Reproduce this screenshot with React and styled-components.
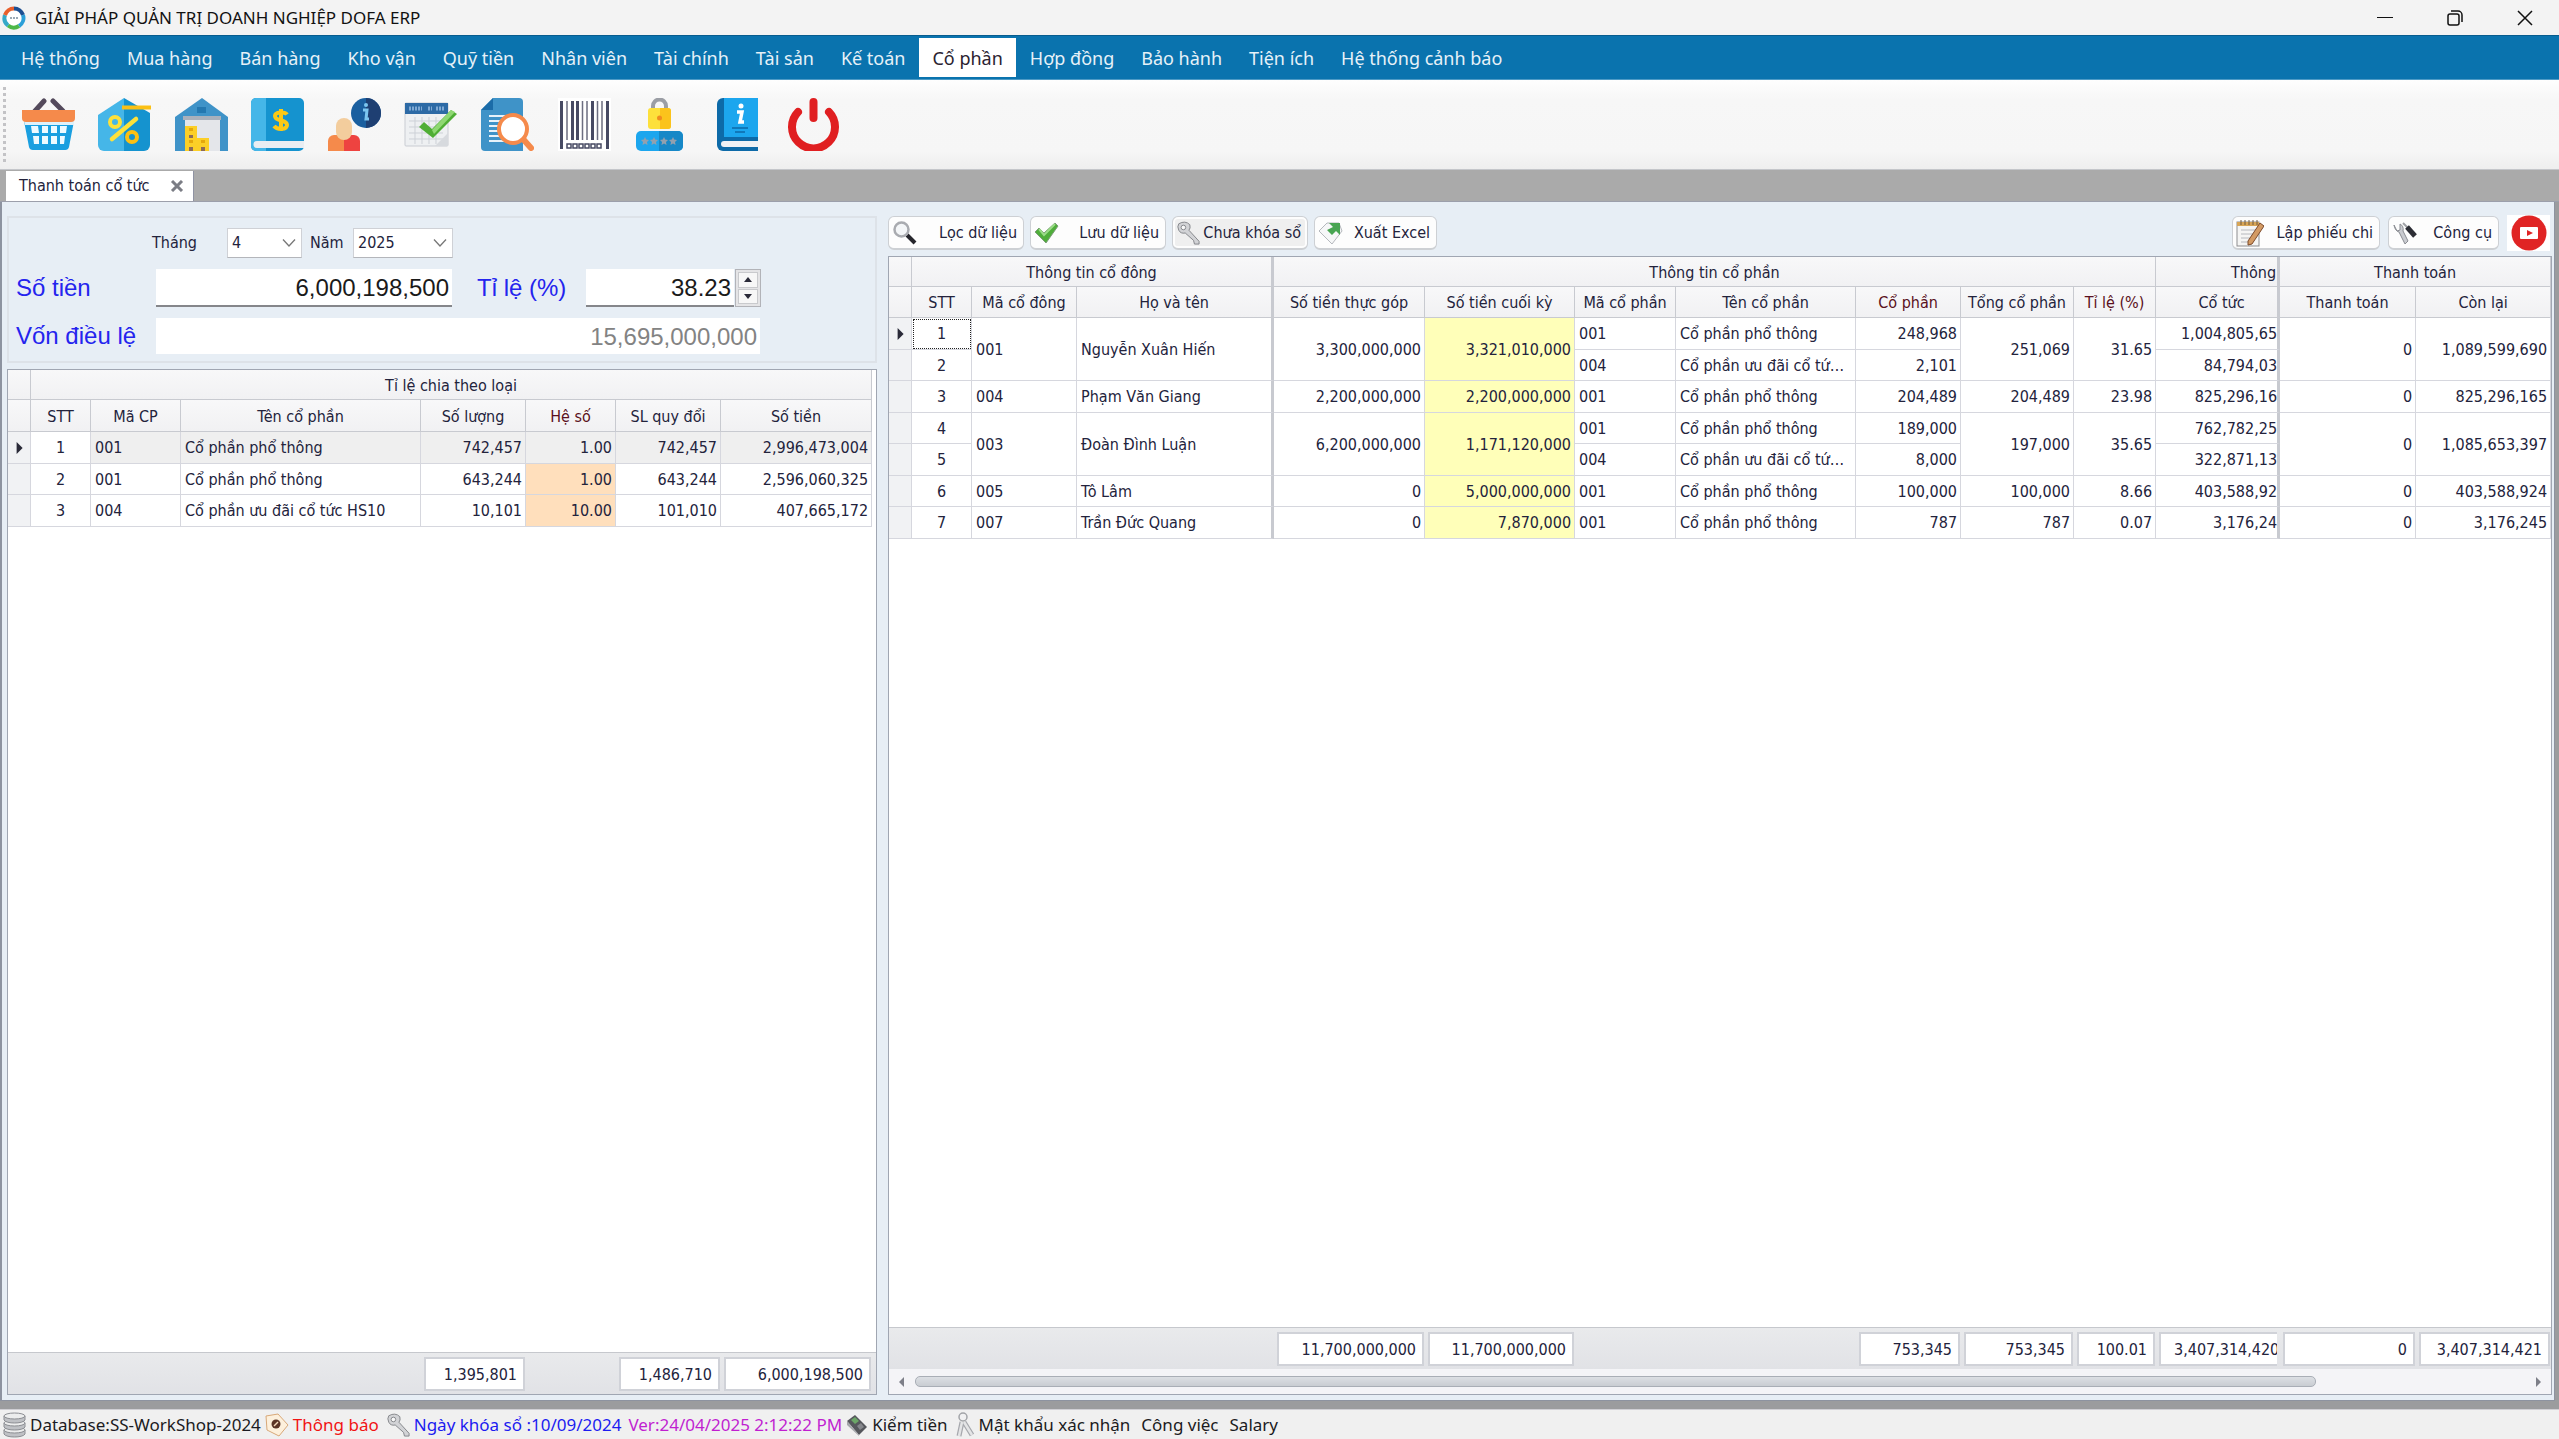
import React, { useState } from 'react';
import styled, { createGlobalStyle } from 'styled-components';

const GRID_FONT = '"DejaVu Sans Condensed", "Noto Sans", sans-serif';
const UI_FONT = '"Noto Sans", sans-serif';
const FORM_FONT = '"Liberation Sans", Arial, sans-serif';

const MENU = [
  'Hệ thống',
  'Mua hàng',
  'Bán hàng',
  'Kho vận',
  'Quỹ tiền',
  'Nhân viên',
  'Tài chính',
  'Tài sản',
  'Kế toán',
  'Cổ phần',
  'Hợp đồng',
  'Bảo hành',
  'Tiện ích',
  'Hệ thống cảnh báo',
];

const RATIO_COLS = [23, 60, 90, 240, 105, 90, 105, 151];

const RATIO_ROWS = [
  ['1', '001', 'Cổ phần phổ thông', '742,457', '1.00', '742,457', '2,996,473,004'],
  ['2', '001', 'Cổ phần phổ thông', '643,244', '1.00', '643,244', '2,596,060,325'],
  ['3', '004', 'Cổ phần ưu đãi cổ tức HS10', '10,101', '10.00', '101,010', '407,665,172'],
];

const HOLDER_COLS = [23, 60, 105, 197, 151, 150, 101, 180, 105, 113, 82, 124, 136, 135];

const HOLDERS = [
  {
    code: '001',
    name: 'Nguyễn Xuân Hiến',
    paidIn: '3,300,000,000',
    closing: '3,321,010,000',
    total: '251,069',
    rate: '31.65',
    paid: '0',
    left: '1,089,599,690',
    shares: [
      ['1', '001', 'Cổ phần phổ thông', '248,968', '1,004,805,65'],
      ['2', '004', 'Cổ phần ưu đãi cổ tức HS10', '2,101', '84,794,03'],
    ],
  },
  {
    code: '004',
    name: 'Phạm Văn Giang',
    paidIn: '2,200,000,000',
    closing: '2,200,000,000',
    total: '204,489',
    rate: '23.98',
    paid: '0',
    left: '825,296,165',
    shares: [['3', '001', 'Cổ phần phổ thông', '204,489', '825,296,16']],
  },
  {
    code: '003',
    name: 'Đoàn Đình Luận',
    paidIn: '6,200,000,000',
    closing: '1,171,120,000',
    total: '197,000',
    rate: '35.65',
    paid: '0',
    left: '1,085,653,397',
    shares: [
      ['4', '001', 'Cổ phần phổ thông', '189,000', '762,782,25'],
      ['5', '004', 'Cổ phần ưu đãi cổ tức HS10', '8,000', '322,871,13'],
    ],
  },
  {
    code: '005',
    name: 'Tô Lâm',
    paidIn: '0',
    closing: '5,000,000,000',
    total: '100,000',
    rate: '8.66',
    paid: '0',
    left: '403,588,924',
    shares: [['6', '001', 'Cổ phần phổ thông', '100,000', '403,588,92']],
  },
  {
    code: '007',
    name: 'Trần Đức Quang',
    paidIn: '0',
    closing: '7,870,000',
    total: '787',
    rate: '0.07',
    paid: '0',
    left: '3,176,245',
    shares: [['7', '001', 'Cổ phần phổ thông', '787', '3,176,24']],
  },
];

const GlobalStyle = createGlobalStyle`
  *, *::before, *::after {
    box-sizing: border-box;
  }
  body {
    margin: 0;
    background: #f0f0f0;
    color: #23233c;
    font: 16px/20px ${GRID_FONT};
  }
  button, input, select {
    font: inherit;
    color: inherit;
    margin: 0;
  }
  svg {
    display: block;
    flex: none;
  }
`;

const Window = styled.div`
  min-height: 100vh;
  display: flex;
  flex-direction: column;
`;

const TitleBar = styled.header`
  height: 35px;
  display: flex;
  align-items: center;
  gap: 9px;
  padding: 0 4px 0 2px;
  background: #f3f3f3;
  color: #111;
  font: 17px/24px ${UI_FONT};
`;

const TitleText = styled.h1`
  flex: 1;
  margin: 0;
  font: inherit;
`;

const WindowButton = styled.button`
  width: 61px;
  height: 34px;
  padding: 0;
  border: 0;
  background: none;
  display: grid;
  place-items: center;
`;

const MenuBar = styled.nav`
  height: 45px;
  display: flex;
  align-items: center;
  gap: 1px;
  padding-left: 8px;
  background: #0a73ae;
  border-top: 1px solid #075c8e;
  border-bottom: 1px solid #4e9bc6;
  font: 18px/24px ${UI_FONT};
`;

const MenuItem = styled.button`
  height: 39px;
  padding: 0 13px;
  border: 0;
  background: ${p => (p.$active ? '#fff' : 'transparent')};
  color: ${p => (p.$active ? '#2b2330' : '#e6f1f8')};
`;

const Toolbar = styled.div`
  height: 90px;
  display: flex;
  align-items: center;
  background: linear-gradient(#fefefe, #f7f7f7 22%, #f6f6f6 80%, #eee);
  border-bottom: 1px solid #c4c6ca;
`;

const Grip = styled.span`
  width: 3px;
  height: 76px;
  margin: 0 4px 0 3px;
  background: repeating-linear-gradient(#c3c3c6 0 3px, transparent 3px 6px);
`;

const Tools = styled.div`
  width: 842px;
  display: grid;
  grid-template-columns: repeat(11, 1fr);
`;

const Tool = styled.button`
  padding: 0;
  border: 0;
  background: none;
  display: grid;
  place-items: center;
`;

const TabStrip = styled.div`
  height: 32px;
  display: flex;
  align-items: flex-end;
  padding-left: 6px;
  background: #aaa;
  border-bottom: 1px solid #9c9fab;
`;

const Tab = styled.div`
  height: 30px;
  width: 188px;
  display: flex;
  align-items: center;
  justify-content: space-between;
  padding: 0 9px 0 13px;
  background: #fff;
  border-right: 1px solid #8f93a3;
`;

const TabClose = styled.button`
  width: 14px;
  padding: 0;
  border: 0;
  background: none;
`;

const Workspace = styled.main`
  flex: 1;
  display: flex;
  padding: 0 4px 8px 0;
  background: #9b9c9e;
`;

const Content = styled.div`
  flex: 1;
  min-width: 0;
  display: flex;
  gap: 11px;
  padding: 14px 2px 5px 5px;
  background: #e7eef5;
  border: solid #8d93a0;
  border-width: 0 1px 1px 2px;
`;

const LeftPane = styled.section`
  flex: none;
  width: 870px;
  display: flex;
  flex-direction: column;
  gap: 6px;
`;

const RightPane = styled.section`
  flex: 1;
  min-width: 0;
  display: flex;
  flex-direction: column;
  gap: 6px;
`;

const Filter = styled.form`
  height: 147px;
  display: flex;
  flex-direction: column;
  gap: 11px;
  padding: 10px 7px;
  border: 2px solid #dde2e8;
`;

const Line = styled.div`
  display: flex;
  align-items: center;
  padding-left: ${p => (p.$indent ? 136 : 0)}px;
`;

const SmallLabel = styled.label`
  width: ${p => p.$w}px;
  padding-left: ${p => p.$pad || 0}px;
`;

const BigLabel = styled.label`
  width: ${p => p.$w}px;
  padding-left: ${p => p.$pad || 0}px;
  color: #2424ee;
  font: 24px/32px ${FORM_FONT};
`;

const SelectBox = styled.span`
  width: ${p => p.$w}px;
  display: grid;
  align-items: center;

  > * {
    grid-area: 1 / 1;
  }
  > svg {
    justify-self: end;
    margin-right: 6px;
    pointer-events: none;
  }
`;

const Select = styled.select`
  height: 30px;
  padding: 0 4px;
  appearance: none;
  background: #fff;
  border: 1px solid #cfd1d6;
  border-bottom-color: #b4b6bb;
`;

const Amount = styled.input`
  width: ${p => p.$w}px;
  height: ${p => (p.readOnly ? 36 : 38)}px;
  padding: 2px 3px 0;
  border: 0;
  border-bottom: ${p => (p.readOnly ? 0 : 2)}px solid #85868a;
  background: #fff;
  color: ${p => (p.readOnly ? '#838383' : '#1a1a1a')};
  font: 24px/32px ${FORM_FONT};
  text-align: right;
`;

const Spin = styled.div`
  width: 26px;
  height: 38px;
  margin-left: 1px;
  display: grid;
  gap: 1px;
  padding: 2px;
  background: #e4e4e6;
  border: 1px solid #b2b3b8;
`;

const SpinButton = styled.button`
  min-height: 0;
  padding: 0;
  display: grid;
  place-items: center;
  background: #f7f7f7;
  border: 1px solid #c9cacd;
`;

const Panel = styled.div`
  flex: 1;
  display: flex;
  flex-direction: column;
  background: #fff;
  border: 1px solid #a0a6b2;
`;

const GridArea = styled.div`
  flex: 1;
  width: ${p => (p.$w ? `${p.$w}px` : 'auto')};
`;

const Table = styled.table`
  width: 100%;
  table-layout: fixed;
  border-spacing: 0;
`;

const HeadCell = styled.th`
  height: ${p => p.$h}px;
  padding: 2px ${p => (p.$align === 'right' ? 1 : 0)}px 0 ${p => (p.$clip ? 10 : 0)}px;
  background: linear-gradient(#f8f8f9, #f1f1f3);
  border: solid #c8cad0;
  border-width: 0 ${p => (p.$thick ? 3 : 1)}px 1px 0;
  color: ${p => (p.$edit ? '#5a1020' : 'inherit')};
  font-weight: normal;
  text-align: ${p => p.$align || 'center'};
  white-space: nowrap;
  overflow: hidden;
`;

const Row = styled.tr`
  height: ${p => (p.$tall ? 32 : 31)}px;
  background: ${p => (p.$focused ? '#efefef' : '#fff')};
`;

const CELL_FILL = {
  indicator: '#f1f2f4',
  plain: '#fff',
  yellow: '#ffffb9',
  orange: '#ffdfbc',
};

const CELL_PADDING = {
  right: '1px 3px 0 4px',
  center: '1px 4px 0',
  clip: '1px 0 0 4px',
};

const Cell = styled.td`
  padding: ${p => CELL_PADDING[p.$clip ? 'clip' : p.$align] || '1px 5px 0 4px'};
  background: ${p => CELL_FILL[p.$fill] || 'transparent'};
  border: solid #d6d7de;
  border-width: 0 ${p => (p.$thick ? 3 : 1)}px 1px 0;
  border-right-color: ${p => (p.$thick ? '#c8cad0' : '#d6d7de')};
  outline: ${p => (p.$focus ? '1px dotted #222' : 'none')};
  outline-offset: -2px;
  text-align: ${p => p.$align || 'left'};
  white-space: nowrap;
  overflow: hidden;
  text-overflow: ${p => (p.$clip ? 'clip' : 'ellipsis')};

  > svg {
    margin: auto;
  }
`;

const Footer = styled.div`
  height: 42px;
  background: linear-gradient(#e9eaec, #e1e2e6);
  border-top: 1px solid #c6c8cd;
`;

const FootCell = styled.td`
  padding: 4px ${p => (p.$clip ? 3 : 1)}px 3px 3px;
`;

const Sum = styled.output`
  display: block;
  height: 34px;
  padding: 6px 6px 0 0;
  overflow: hidden;
  background: #fff;
  border: 2px solid #d0d2d8;
  border-right-width: ${p => (p.$clip ? 0 : 2)}px;
  padding-left: ${p => (p.$clip ? 13 : 0)}px;
  padding-right: ${p => (p.$clip ? 0 : 6)}px;
  text-align: ${p => (p.$clip ? 'left' : 'right')};
`;

const ScrollBar = styled.div`
  height: 25px;
  display: flex;
  align-items: center;
  gap: 8px;
  padding: 0 8px;
  background: #f4f4f7;
`;

const ScrollButton = styled.button`
  padding: 0;
  border: 0;
  background: none;
`;

const Track = styled.div`
  flex: 1;
`;

const Thumb = styled.div`
  width: 87%;
  height: 11px;
  border: 1px solid #a9aeb6;
  border-radius: 5px;
  background: linear-gradient(#dcdfe4, #c9cdd2);
`;

const Commands = styled.div`
  height: 34px;
  display: flex;
  align-items: center;
  gap: ${p => p.$gap || 6}px;
  padding-right: ${p => (p.$gap ? 2 : 0)}px;
`;

const Spacer = styled.span`
  flex: 1;
`;

const Command = styled.button`
  width: ${p => p.$w}px;
  height: 34px;
  display: flex;
  align-items: center;
  justify-content: space-between;
  padding: 0 6px 0 3px;
  border: 1px solid #cdd0d4;
  border-bottom-width: 2px;
  border-radius: 6px;
  background: ${p => (p.$pressed ? '#efefef' : '#fdfdfd')};
  box-shadow: inset 0 0 0 2px #fdfdfd;
  white-space: nowrap;
`;

const VideoButton = styled.button`
  width: 43px;
  height: 36px;
  padding: 0;
  border: 0;
  background: #fff;
  display: grid;
  place-items: center;
`;

const StatusBar = styled.footer`
  height: 30px;
  display: flex;
  align-items: center;
  gap: 4px;
  padding-left: 3px;
  background: #f0f0f0;
  border-top: 1px solid #cfcfd4;
  font: 17px/24px ${UI_FONT};
`;

const Status = styled.span`
  margin-right: ${p => p.$gap || 0}px;
  color: ${p => p.$color || '#1b1b22'};
  white-space: nowrap;
`;

const Icon = ({ size = 53, box = 53, children }) => (
  <svg width={size} height={size} viewBox={`0 0 ${box} ${box}`} aria-hidden="true">
    {children}
  </svg>
);

const Triangle = ({ dir, color = '#2a2a38', size = 10 }) => {
  const points = {
    right: '3,0 8,5 3,10',
    left: '7,0 2,5 7,10',
    up: '1,7 5,2 9,7',
    down: '1,3 5,8 9,3',
  };
  return (
    <svg width={size} height={size} viewBox="0 0 10 10" aria-hidden="true">
      <polygon points={points[dir]} fill={color} />
    </svg>
  );
};

const Chevron = () => (
  <svg width="14" height="10" viewBox="0 0 14 10" aria-hidden="true">
    <path d="M1 1.500 7 8 13 1.500" fill="none" stroke="#777" strokeWidth="1.300" />
  </svg>
);

const LogoIcon = () => (
  <Icon size={24} box={24}>
    <circle cx="12" cy="12" r="9" fill="#fff" />
    <path d="M12 2.500A9.500 9.500 0 0 1 21 9" fill="none" stroke="#1d4f91" strokeWidth="4" />
    <path d="M21 9A9.500 9.500 0 0 1 17 20" fill="none" stroke="#2b9fd8" strokeWidth="4" />
    <path d="M17 20A9.500 9.500 0 0 1 6 19.500" fill="none" stroke="#4cb848" strokeWidth="4" />
    <path d="M6 19.500A9.500 9.500 0 0 1 3 9" fill="none" stroke="#35a9c8" strokeWidth="4" />
    <path d="M3 9A9.500 9.500 0 0 1 12 2.500" fill="none" stroke="#e9602c" strokeWidth="4" />
    <path d="M8 12h8" stroke="#9aa9b5" strokeWidth="2" strokeDasharray="2 1" />
  </Icon>
);

const BasketIcon = () => (
  <Icon>
    <path d="M13 13 22 3M41 13 31 3" stroke="#544a5c" strokeWidth="5" strokeLinecap="round" />
    <path d="M2 23h50l-5 26a4 4 0 0 1-4 3H11a4 4 0 0 1-4-3z" fill="#1a9fe0" />
    <path d="M2 23h50v4H3z" fill="#dff1fa" />
    <path d="M0 12h53v8a4 4 0 0 1-4 4H4a4 4 0 0 1-4-4z" fill="#f58a4b" />
    <g fill="#eefaff">
      <path d="M9 28h7l1 7h-7zM20 28h6v7h-6zM29 28h6v7h-6zM38 28h7l-1 7h-6z" />
      <path d="M11 38h6v8h-5zM20 38h6v8h-6zM29 38h6v8h-6zM38 38h5l-1 8h-4z" />
    </g>
  </Icon>
);

const DiscountIcon = () => (
  <Icon>
    <path d="M0 17 26 0v53H6a6 6 0 0 1-6-6z" fill="#45b6e8" />
    <path d="M26 0 52 15v32a6 6 0 0 1-6 6H26z" fill="#1593cf" />
    <path d="M24 9.500h29" stroke="#fbc014" strokeWidth="4" />
    <path d="M14 41 38 21" stroke="#fde13b" strokeWidth="4.500" strokeLinecap="round" />
    <circle cx="17" cy="24" r="5" fill="none" stroke="#fde13b" strokeWidth="4" />
    <circle cx="34" cy="39" r="5" fill="none" stroke="#fbc014" strokeWidth="4" />
  </Icon>
);

const WarehouseIcon = () => (
  <Icon>
    <path d="M0 19 27 0l26 19v34H0z" fill="#3f93c8" />
    <path d="M10 22h35v31H10z" fill="#e4e6ea" />
    <path d="M22 9h9v6h-9z" fill="#2478b0" />
    <path d="M8 18h38v4H8z" fill="#a8b0bc" />
    <path d="M10 28h12v12h12v13H10z" fill="#fccf27" />
    <path d="M14 30h4v3h-4zM14 42h4v3h-4zM26 42h4v3h-4z" fill="#e5a80c" />
    <path d="M14 37h4v3h-4zM14 49h4v4h-4zM26 49h4v4h-4z" fill="#8d6b58" />
  </Icon>
);

const LedgerIcon = () => (
  <Icon>
    <rect width="53" height="53" rx="5" fill="#1593cf" />
    <path d="M5 0h10v53H5a5 5 0 0 1-5-5V5a5 5 0 0 1 5-5z" fill="#45b6e8" />
    <path d="M6 43h47v7H6a3 3 0 0 1 0-7z" fill="#e9edf2" />
    <path
      d="M36 16.500c-2-3-12-3-12 1.500 0 6 12 3 12 9 0 5-10 5-13 1M30 11v22"
      fill="none"
      stroke="#fcc916"
      strokeWidth="4"
    />
  </Icon>
);

const StaffIcon = () => (
  <Icon>
    <path d="M0 53V43a6 6 0 0 1 6-6h10v16z" fill="#f58a4b" />
    <path d="M16 37h10a6 6 0 0 1 6 6v10H16z" fill="#ee4340" />
    <rect x="8" y="20" width="16" height="22" rx="8" fill="#f3cd9d" />
    <circle cx="38" cy="15" r="15" fill="#1a5f9f" />
    <path d="M38 0a15 15 0 0 1 0 30z" fill="#1e3f72" />
    <circle cx="38" cy="7" r="2" fill="#7cc6ef" />
    <path d="M35 12h4l-1 9h3" fill="none" stroke="#7cc6ef" strokeWidth="3" />
  </Icon>
);

const CalendarIcon = () => (
  <Icon>
    <rect x="1" y="5" width="43" height="43" rx="1" fill="#eef0f2" stroke="#c9ccd2" />
    <path d="M1 5h43v11H1z" fill="#2d6aa5" />
    <path d="M5 10.500h13M24 10.500h4M32 10.500h8" stroke="#7fa9d4" strokeWidth="4" strokeDasharray="2 1" />
    <path d="M5 23h34M5 29h34M5 35h34M5 41h34M11 19v27M18 19v27M25 19v27M32 19v27" stroke="#cdd1d7" />
    <path d="M44 35v13H31z" fill="#d7dade" />
    <path d="m15 29 5-5 8 7L47 12l6 4-24 24z" fill="#4fae35" />
    <path d="m28 32 19-20 4 2-21 22z" fill="#8fd873" />
  </Icon>
);

const ReportSearchIcon = () => (
  <Icon>
    <path d="M12 0h26a4 4 0 0 1 4 4v49H4a4 4 0 0 1-4-4V12z" fill="#3f93c8" />
    <path d="M12 0v12H0z" fill="#1b6ca8" />
    <path d="M8 18h22M8 23h18M8 28h12M8 33h12M8 38h14M8 43h18" stroke="#e6f2fa" strokeWidth="2" />
    <path d="m42 41 8 9" stroke="#f58a4b" strokeWidth="6" strokeLinecap="round" />
    <circle cx="32" cy="31" r="14" fill="#fff" stroke="#f58a4b" strokeWidth="4" />
  </Icon>
);

const BarcodeIcon = () => (
  <Icon>
    <path fill="#fff" d="M0 0h53v53H0z" />
    <path d="M3.500 3v48M49.500 3v48" stroke="#474a63" strokeWidth="3" />
    <path d="M14.500 3v39M19.500 3v39M34.500 3v39" stroke="#474a63" strokeWidth="3" />
    <path d="M9 3v39M24.500 3v39M29 3v39M39.500 3v39M44 3v39" stroke="#6c6e80" strokeWidth="1.500" />
    <g fill="none" stroke="#474a63" strokeWidth="1.500">
      {[9, 15, 21, 27, 33, 39].map(x => (
        <rect key={x} x={x} y="46" width="4" height="4" />
      ))}
    </g>
  </Icon>
);

const PasswordIcon = () => (
  <Icon>
    <path d="M19 12V8a6.500 6.500 0 0 1 13 0v4" fill="none" stroke="#9b9ea5" strokeWidth="4" />
    <rect x="14" y="10" width="23" height="21" rx="3" fill="#fde03b" />
    <path d="M26 10h8a3 3 0 0 1 3 3v15a3 3 0 0 1-3 3h-8z" fill="#fbc31c" />
    <circle cx="25.500" cy="20" r="2.500" fill="#f08b1f" />
    <rect x="2" y="33" width="47" height="20" rx="5" fill="#1ca6ee" />
    <path d="M25 33h19a5 5 0 0 1 5 5v10a5 5 0 0 1-5 5H25z" fill="#1788c7" />
    {[11, 20, 30, 39].map(x => (
      <path
        key={x}
        transform={`translate(${x} 43)`}
        d="m0-4 1.200 2.600 2.800.4-2 2 .5 3L0 2.600-2.500 4l.5-3-2-2 2.800-.4z"
        fill="#93a0ae"
      />
    ))}
  </Icon>
);

const GuideIcon = () => (
  <Icon>
    <path d="M12 0h35v53H12a6 6 0 0 1-6-6V6a6 6 0 0 1 6-6z" fill="#0d6aa8" />
    <path d="M13 0h34v39H13z" fill="#1ca6ee" />
    <path d="M13 43h34v6H13a3 3 0 0 1 0-6z" fill="#eef1f5" />
    <circle cx="30" cy="8" r="2.500" fill="#fff" />
    <path d="M26 14h5l-2 10h4" fill="none" stroke="#fff" strokeWidth="3.500" />
    <path d="M21 30h16M24 34h10" stroke="#0d6aa8" strokeWidth="1.500" />
  </Icon>
);

const PowerIcon = () => (
  <Icon>
    <path
      d="M11 14A21.500 21.500 0 1 0 42 14"
      fill="none"
      stroke="#e01f21"
      strokeWidth="8"
      strokeLinecap="round"
    />
    <path d="M26.500 4v16" stroke="#e01f21" strokeWidth="8" strokeLinecap="round" />
  </Icon>
);

const SearchIcon = () => (
  <Icon size={26} box={26}>
    <path d="m15 15 8 8" stroke="#26262c" strokeWidth="4" />
    <circle cx="9.500" cy="9.500" r="7" fill="#f4f6f8" stroke="#a9abb0" strokeWidth="2.500" />
  </Icon>
);

const CheckIcon = () => (
  <Icon size={26} box={26}>
    <path d="m1 12 4-4 5 5L21 3l3 3-12 17z" fill="#4fae3a" stroke="#7c9b78" />
    <path d="m5 9 5 6L21 4" fill="none" stroke="#9bdb88" strokeWidth="2" />
  </Icon>
);

const KeyIcon = () => (
  <Icon size={24} box={26}>
    <path d="M3 3q7-4 12 1 1 4-1 6l11 12v3h-5l-1-4-9-8q-5 1-7-3-2-4 0-7z" fill="#d2d3d6" stroke="#808287" />
    <circle cx="8" cy="7" r="2.500" fill="#f8f8f8" stroke="#808287" />
  </Icon>
);

const ExportIcon = () => (
  <Icon size={26} box={26}>
    <path d="m1 11 8-8h12l3 8-10 13z" fill="#f6f7f8" stroke="#b5b8bd" />
    <path d="m9 10 5 5 4-4 4 4V3H11l4 4z" fill="#48a552" />
  </Icon>
);

const NoteIcon = () => (
  <Icon size={28} box={28}>
    <rect x="1" y="3" width="22" height="24" fill="#f5f5f4" stroke="#8d8d90" />
    <path d="M1 3h22v4H1z" fill="#d7a556" />
    <path d="M5 1v5M9 1v5M13 1v5M17 1v5M21 1v5" stroke="#6e5a42" />
    <path d="M5 11h14M5 15h12M5 19h9M5 23h12" stroke="#b6b8bd" />
    <path d="M12 22 24 4l4 3-12 18-4 1z" fill="#d39a63" stroke="#7c4a2b" />
  </Icon>
);

const ToolsIcon = () => (
  <Icon size={26} box={26}>
    <path d="M2 5q1 6 5 7l6 12 3-3-5-10q1-5-3-7v6l-3 1z" fill="#c9cbd0" stroke="#8b8d93" />
    <path d="m11 3 5 5" stroke="#9fa1a6" strokeWidth="2" />
    <path d="m15 7 8 9" stroke="#2c2d35" strokeWidth="5" />
  </Icon>
);

const VideoIcon = () => (
  <svg width="38" height="36" viewBox="0 0 38 36" aria-hidden="true">
    <circle cx="19" cy="18" r="17.500" fill="#e02424" />
    <rect x="10" y="12" width="18" height="12" rx="1" fill="#fff" />
    <path d="m17 15 6 3-6 3z" fill="#e02424" />
  </svg>
);

const DatabaseIcon = () => (
  <svg width="23" height="26" viewBox="0 0 23 26" aria-hidden="true">
    {[18, 11, 4].map(y => (
      <g key={y} stroke="#8c8e93">
        <path d={`M1 ${y}v4c2 4 19 4 21 0v-4`} fill="#bfc1c5" />
        <ellipse cx="11.500" cy={y} rx="10.500" ry="3" fill="#eceded" />
      </g>
    ))}
  </svg>
);

const TagIcon = () => (
  <Icon size={24} box={24}>
    <path d="m1 3 12-2 10 11-9 11L2 17z" fill="#fdf0dc" stroke="#d8a878" />
    <circle cx="11" cy="11" r="4.500" fill="#5a3426" />
    <path d="M9 13 13 9" stroke="#f2d8ba" strokeWidth="1.500" />
  </Icon>
);

const CounterIcon = () => (
  <Icon size={22} box={22}>
    <path d="M1 7 9 1l12 12-8 8z" fill="#55575c" />
    <path d="M1 7v4l12 11v-1z" fill="#a5a7ab" />
    <path d="m5 6 4-3 4 4-4 3z" fill="#6ba667" />
    <path d="m11 12 4-3 3 4-4 3z" fill="#85878c" />
  </Icon>
);

const KeysIcon = () => (
  <svg width="20" height="26" viewBox="0 0 20 26" aria-hidden="true">
    <circle cx="8" cy="5" r="4" fill="#f1f1f2" stroke="#a2a4a8" strokeWidth="1.500" />
    <path d="m7 10-3 14M9 10l8 13" stroke="#a6a8ad" strokeWidth="5" />
    <path d="m7 10-3 14M9 10l8 13" stroke="#e4e5e6" strokeWidth="2.500" />
  </svg>
);

const TOOLS = [
  ['Bán hàng', BasketIcon],
  ['Khuyến mãi', DiscountIcon],
  ['Kho', WarehouseIcon],
  ['Sổ quỹ', LedgerIcon],
  ['Nhân viên', StaffIcon],
  ['Lịch', CalendarIcon],
  ['Báo cáo', ReportSearchIcon],
  ['Mã vạch', BarcodeIcon],
  ['Mật khẩu', PasswordIcon],
  ['Hướng dẫn', GuideIcon],
  ['Thoát', PowerIcon],
];

const Cols = ({ widths }) => (
  <colgroup>
    {widths.map((width, i) => (
      <col key={i} style={{ width }} />
    ))}
  </colgroup>
);

const FilterForm = () => {
  const [rate, setRate] = useState(38.23);
  const step = by => setRate(value => Math.round((value + by) * 100) / 100);

  return (
    <Filter>
      <Line $indent>
        <SmallLabel $w={75} htmlFor="month">
          Tháng
        </SmallLabel>
        <SelectBox $w={75}>
          <Select id="month" defaultValue="4">
            {Array.from(Array(12).keys()).map(i => (
              <option key={i}>{i + 1}</option>
            ))}
          </Select>
          <Chevron />
        </SelectBox>
        <SmallLabel $w={51} $pad={8} htmlFor="year">
          Năm
        </SmallLabel>
        <SelectBox $w={100}>
          <Select id="year" defaultValue="2025">
            <option>2024</option>
            <option>2025</option>
          </Select>
          <Chevron />
        </SelectBox>
      </Line>
      <Line>
        <BigLabel $w={140} htmlFor="amount">
          Số tiền
        </BigLabel>
        <Amount $w={296} id="amount" defaultValue="6,000,198,500" />
        <BigLabel $w={134} $pad={25} htmlFor="rate">
          Tỉ lệ (%)
        </BigLabel>
        <Amount
          $w={148}
          id="rate"
          value={rate}
          onChange={e => setRate(Number(e.target.value) || 0)}
        />
        <Spin>
          <SpinButton type="button" aria-label="Tăng" onClick={() => step(0.01)}>
            <Triangle dir="up" />
          </SpinButton>
          <SpinButton type="button" aria-label="Giảm" onClick={() => step(-0.01)}>
            <Triangle dir="down" />
          </SpinButton>
        </Spin>
      </Line>
      <Line>
        <BigLabel $w={140} htmlFor="capital">
          Vốn điều lệ
        </BigLabel>
        <Amount $w={604} id="capital" readOnly value="15,695,000,000" />
      </Line>
    </Filter>
  );
};

const RatioGrid = () => (
  <Panel>
    <GridArea $w={864}>
      <Table>
        <Cols widths={RATIO_COLS} />
        <thead>
          <tr>
            <HeadCell $h={30} />
            <HeadCell $h={30} colSpan={7}>
              Tỉ lệ chia theo loại
            </HeadCell>
          </tr>
          <tr>
            <HeadCell $h={32} />
            <HeadCell>STT</HeadCell>
            <HeadCell>Mã CP</HeadCell>
            <HeadCell>Tên cổ phần</HeadCell>
            <HeadCell>Số lượng</HeadCell>
            <HeadCell $edit>Hệ số</HeadCell>
            <HeadCell>SL quy đổi</HeadCell>
            <HeadCell>Số tiền</HeadCell>
          </tr>
        </thead>
        <tbody>
          {RATIO_ROWS.map(([no, code, name, qty, factor, converted, amount], i) => (
            <Row key={no} $tall={i % 2 === 0} $focused={i === 0}>
              <Cell $fill="indicator">{i === 0 && <Triangle dir="right" size={12} />}</Cell>
              <Cell $fill="plain" $align="center">
                {no}
              </Cell>
              <Cell>{code}</Cell>
              <Cell>{name}</Cell>
              <Cell $align="right">{qty}</Cell>
              <Cell $align="right" $fill={i === 0 ? undefined : 'orange'}>
                {factor}
              </Cell>
              <Cell $align="right">{converted}</Cell>
              <Cell $align="right">{amount}</Cell>
            </Row>
          ))}
        </tbody>
      </Table>
    </GridArea>
    <Footer>
      <Table>
        <Cols widths={[413, 105, 90, 105, 151, 4]} />
        <tbody>
          <tr>
            <FootCell />
            <FootCell>
              <Sum>1,395,801</Sum>
            </FootCell>
            <FootCell />
            <FootCell>
              <Sum>1,486,710</Sum>
            </FootCell>
            <FootCell>
              <Sum>6,000,198,500</Sum>
            </FootCell>
            <FootCell />
          </tr>
        </tbody>
      </Table>
    </Footer>
  </Panel>
);

const HolderRows = ({ holder }) => {
  const span = holder.shares.length;

  return holder.shares.map(([no, type, typeName, shares, dividend], i) => (
    <Row key={no} $tall={no % 2 === 1}>
      <Cell $fill="indicator">{no === '1' && <Triangle dir="right" size={12} />}</Cell>
      <Cell $align="center" $focus={no === '1'}>
        {no}
      </Cell>
      {i === 0 && (
        <>
          <Cell rowSpan={span}>{holder.code}</Cell>
          <Cell rowSpan={span} $thick>
            {holder.name}
          </Cell>
          <Cell rowSpan={span} $align="right">
            {holder.paidIn}
          </Cell>
          <Cell rowSpan={span} $align="right" $fill="yellow">
            {holder.closing}
          </Cell>
        </>
      )}
      <Cell>{type}</Cell>
      <Cell>{typeName}</Cell>
      <Cell $align="right">{shares}</Cell>
      {i === 0 && (
        <>
          <Cell rowSpan={span} $align="right">
            {holder.total}
          </Cell>
          <Cell rowSpan={span} $align="right">
            {holder.rate}
          </Cell>
        </>
      )}
      <Cell $align="right" $clip $thick>
        {dividend}
      </Cell>
      {i === 0 && (
        <>
          <Cell rowSpan={span} $align="right">
            {holder.paid}
          </Cell>
          <Cell rowSpan={span} $align="right">
            {holder.left}
          </Cell>
        </>
      )}
    </Row>
  ));
};

const HolderGrid = () => (
  <Panel>
    <GridArea>
      <Table>
        <Cols widths={HOLDER_COLS} />
        <thead>
          <tr>
            <HeadCell $h={30} />
            <HeadCell colSpan={3} $thick>
              Thông tin cổ đông
            </HeadCell>
            <HeadCell colSpan={7}>Thông tin cổ phần</HeadCell>
            <HeadCell $thick $align="right">
              Thông
            </HeadCell>
            <HeadCell colSpan={2}>Thanh toán</HeadCell>
          </tr>
          <tr>
            <HeadCell $h={31} />
            <HeadCell>STT</HeadCell>
            <HeadCell>Mã cổ đông</HeadCell>
            <HeadCell $thick>Họ và tên</HeadCell>
            <HeadCell>Số tiền thực góp</HeadCell>
            <HeadCell>Số tiền cuối kỳ</HeadCell>
            <HeadCell>Mã cổ phần</HeadCell>
            <HeadCell>Tên cổ phần</HeadCell>
            <HeadCell $edit>Cổ phần</HeadCell>
            <HeadCell>Tổng cổ phần</HeadCell>
            <HeadCell $edit>Tỉ lệ (%)</HeadCell>
            <HeadCell $thick $clip>
              Cổ tức
            </HeadCell>
            <HeadCell>Thanh toán</HeadCell>
            <HeadCell>Còn lại</HeadCell>
          </tr>
        </thead>
        <tbody>
          {HOLDERS.map(holder => (
            <HolderRows key={holder.code} holder={holder} />
          ))}
        </tbody>
      </Table>
    </GridArea>
    <Footer>
      <Table>
        <Cols widths={[385, 151, 150, 281, 105, 113, 82, 124, 136, 135]} />
        <tbody>
          <tr>
            <FootCell />
            <FootCell>
              <Sum>11,700,000,000</Sum>
            </FootCell>
            <FootCell>
              <Sum>11,700,000,000</Sum>
            </FootCell>
            <FootCell />
            <FootCell>
              <Sum>753,345</Sum>
            </FootCell>
            <FootCell>
              <Sum>753,345</Sum>
            </FootCell>
            <FootCell>
              <Sum>100.01</Sum>
            </FootCell>
            <FootCell $clip>
              <Sum $clip>3,407,314,420</Sum>
            </FootCell>
            <FootCell>
              <Sum>0</Sum>
            </FootCell>
            <FootCell>
              <Sum>3,407,314,421</Sum>
            </FootCell>
          </tr>
        </tbody>
      </Table>
    </Footer>
    <ScrollBar>
      <ScrollButton aria-label="Cuộn trái">
        <Triangle dir="left" color="#7d7f88" />
      </ScrollButton>
      <Track>
        <Thumb />
      </Track>
      <ScrollButton aria-label="Cuộn phải">
        <Triangle dir="right" color="#7d7f88" />
      </ScrollButton>
    </ScrollBar>
  </Panel>
);

const App = () => {
  const [active, setActive] = useState('Cổ phần');

  return (
    <Window>
      <GlobalStyle />
      <TitleBar>
        <LogoIcon />
        <TitleText>GIẢI PHÁP QUẢN TRỊ DOANH NGHIỆP DOFA ERP</TitleText>
        <WindowButton aria-label="Thu nhỏ">
          <svg width="16" height="16" viewBox="0 0 16 16">
            <path d="M0 7.500h16" stroke="#111" />
          </svg>
        </WindowButton>
        <WindowButton aria-label="Khôi phục">
          <svg width="16" height="16" viewBox="0 0 16 16" fill="none" stroke="#111" strokeWidth="1.500">
            <rect x="1" y="4" width="11" height="11" rx="2" />
            <path d="M4 1h7a4 4 0 0 1 4 4v7" />
          </svg>
        </WindowButton>
        <WindowButton aria-label="Đóng">
          <svg width="16" height="16" viewBox="0 0 16 16">
            <path d="m1 1 14 14M15 1 1 15" stroke="#111" strokeWidth="1.500" />
          </svg>
        </WindowButton>
      </TitleBar>
      <MenuBar>
        {MENU.map(item => (
          <MenuItem key={item} $active={item === active} onClick={() => setActive(item)}>
            {item}
          </MenuItem>
        ))}
      </MenuBar>
      <Toolbar>
        <Grip />
        <Tools>
          {TOOLS.map(([label, ToolIcon]) => (
            <Tool key={label} aria-label={label}>
              <ToolIcon />
            </Tool>
          ))}
        </Tools>
      </Toolbar>
      <TabStrip>
        <Tab>
          Thanh toán cổ tức
          <TabClose aria-label="Đóng tab">
            <svg width="14" height="12" viewBox="0 0 14 12">
              <path d="m2 1 10 10M12 1 2 11" stroke="#7b7d85" strokeWidth="3" />
            </svg>
          </TabClose>
        </Tab>
      </TabStrip>
      <Workspace>
        <Content>
          <LeftPane>
            <FilterForm />
            <RatioGrid />
          </LeftPane>
          <RightPane>
            <Commands>
              <Command $w={136}>
                <SearchIcon />
                Lọc dữ liệu
              </Command>
              <Command $w={136}>
                <CheckIcon />
                Lưu dữ liệu
              </Command>
              <Command $w={136} $pressed>
                <KeyIcon />
                Chưa khóa sổ
              </Command>
              <Command $w={123}>
                <ExportIcon />
                Xuất Excel
              </Command>
              <Spacer />
              <Commands $gap={8}>
                <Command $w={148}>
                  <NoteIcon />
                  Lập phiếu chi
                </Command>
                <Command $w={111}>
                  <ToolsIcon />
                  Công cụ
                </Command>
                <VideoButton aria-label="Video hướng dẫn">
                  <VideoIcon />
                </VideoButton>
              </Commands>
            </Commands>
            <HolderGrid />
          </RightPane>
        </Content>
      </Workspace>
      <StatusBar>
        <DatabaseIcon />
        <Status>Database:SS-WorkShop-2024</Status>
        <TagIcon />
        <Status $color="#f01414" $gap={3}>
          Thông báo
        </Status>
        <KeyIcon />
        <Status $color="#1c1cf0" $gap={3}>
          Ngày khóa sổ :10/09/2024
        </Status>
        <Status $color="#c01fd0">Ver:24/04/2025 2:12:22 PM</Status>
        <CounterIcon />
        <Status $gap={3}>Kiểm tiền</Status>
        <KeysIcon />
        <Status $gap={7}>Mật khẩu xác nhận</Status>
        <Status $gap={7}>Công việc</Status>
        <Status>Salary</Status>
      </StatusBar>
    </Window>
  );
};

export default App;
